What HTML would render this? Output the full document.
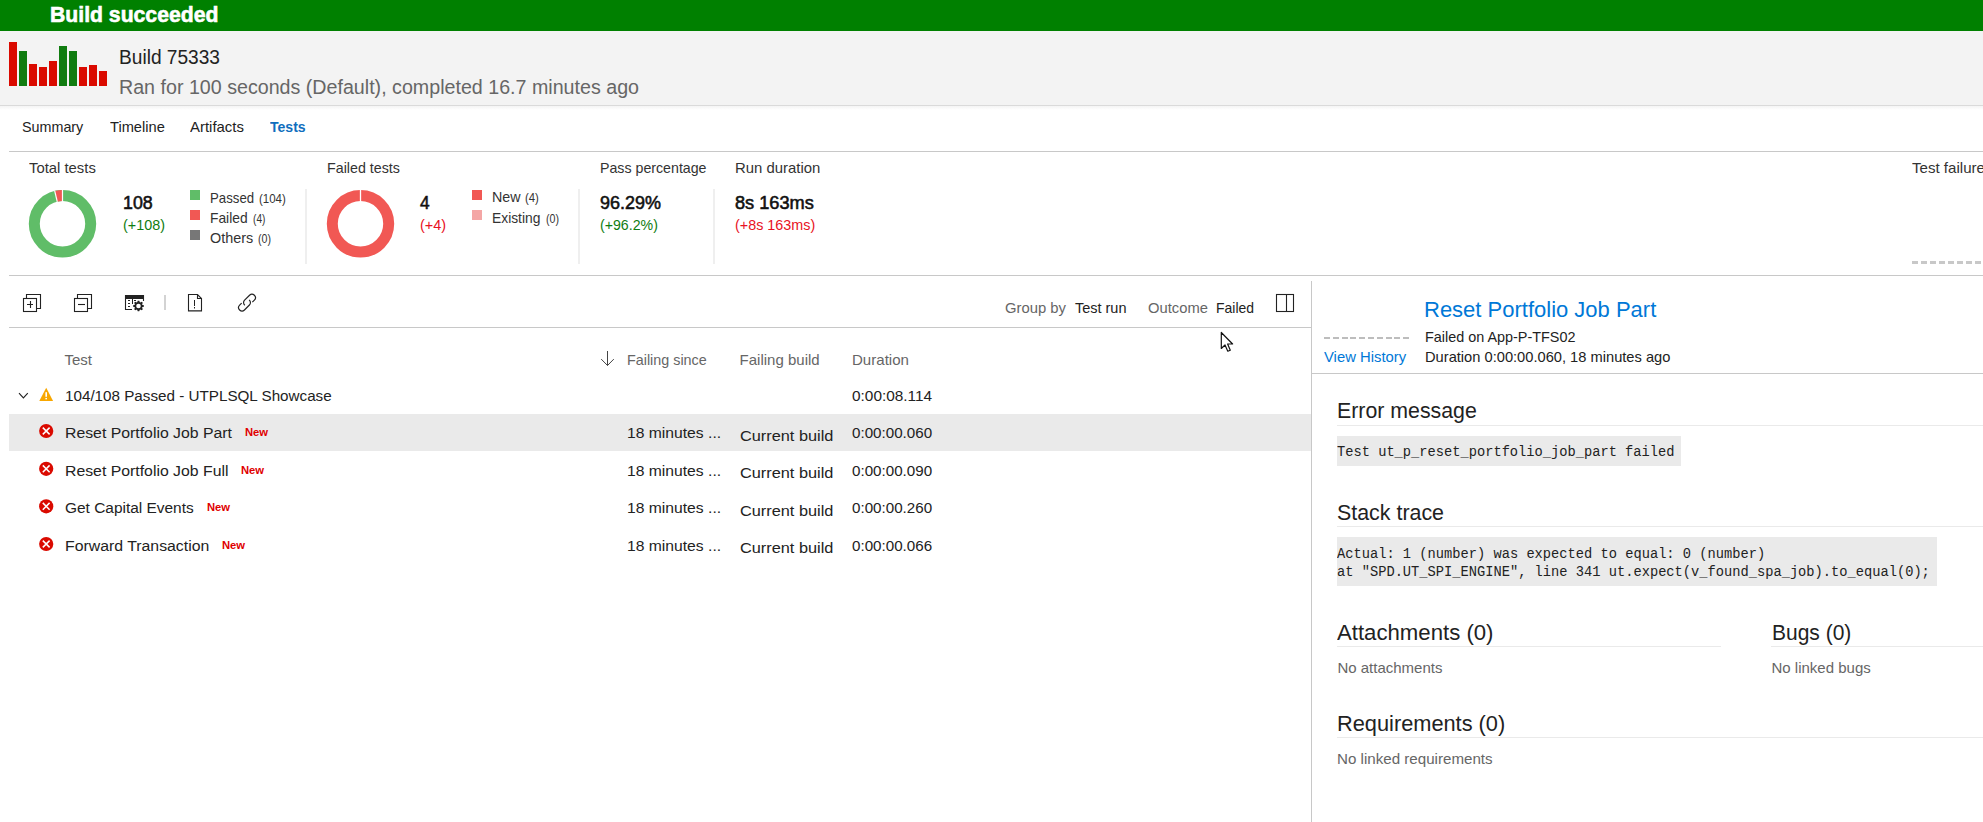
<!DOCTYPE html>
<html><head><meta charset="utf-8"><style>
html,body{margin:0;padding:0;}
body{width:1983px;height:822px;overflow:hidden;position:relative;background:#fff;font-family:"Liberation Sans",sans-serif;}
.a{position:absolute;}
.t{position:absolute;white-space:pre;transform-origin:0 0;}
</style></head><body>
<!-- top green bar -->
<div class="a" style="left:0;top:0;width:1983px;height:31px;background:#008000"></div>
<!-- header band -->
<div class="a" style="left:0;top:31px;width:1983px;height:74px;background:#f3f3f3"></div>
<div class="a" style="left:0;top:105px;width:1983px;height:1px;background:#dadada"></div>
<div class="a" style="left:0;top:106px;width:1983px;height:4px;background:linear-gradient(#f4f4f4,#fff)"></div>
<!-- build history bars -->
<svg class="a" style="left:0;top:31px" width="120" height="60">
  <g fill="#da0a00">
    <rect x="9" y="11" width="8" height="44"/>
    <rect x="29" y="33" width="8" height="22"/>
    <rect x="39" y="36" width="8" height="19"/>
    <rect x="49" y="30" width="8" height="25"/>
    <rect x="79" y="36" width="8" height="19"/>
    <rect x="89" y="34" width="8" height="21"/>
    <rect x="99" y="40" width="8" height="15"/>
  </g>
  <g fill="#107c10">
    <rect x="19" y="20" width="8" height="35"/>
    <rect x="59" y="15" width="8" height="40"/>
    <rect x="69" y="20" width="8" height="35"/>
  </g>
</svg>
<!-- tab underline -->
<div class="a" style="left:9px;top:151px;width:1974px;height:1px;background:#c8c8c8"></div>
<!-- stats bottom line -->
<div class="a" style="left:9px;top:275px;width:1974px;height:1px;background:#c8c8c8"></div>
<!-- stats separators -->
<div class="a" style="left:305px;top:189px;width:2px;height:75px;background:#efefef"></div>
<div class="a" style="left:578px;top:189px;width:2px;height:75px;background:#efefef"></div>
<div class="a" style="left:713px;top:189px;width:2px;height:75px;background:#efefef"></div>
<!-- donut total -->
<svg class="a" style="left:22px;top:183px" width="81" height="81">
  <g transform="translate(40.5,40.8)">
    <circle r="28.2" fill="none" stroke="#60bd68" stroke-width="11"/>
    <path d="M0,-33.7 A33.7,33.7 0 0 0 -7.75,-32.8 L-5.2,-22.1 A22.7,22.7 0 0 1 0,-22.7 Z" fill="#f15854"/>
    <line x1="0" y1="-34" x2="0" y2="-22" stroke="#fff" stroke-width="1.2"/>
    <line x1="-7.8" y1="-33" x2="-5.2" y2="-22" stroke="#fff" stroke-width="1.2"/>
  </g>
</svg>
<!-- legend squares -->
<div class="a" style="left:190px;top:190px;width:10px;height:10px;background:#60bd68"></div>
<div class="a" style="left:190px;top:210px;width:10px;height:10px;background:#f15854"></div>
<div class="a" style="left:190px;top:230px;width:10px;height:10px;background:#777"></div>
<!-- donut failed -->
<svg class="a" style="left:320px;top:183px" width="81" height="81">
  <g transform="translate(40.5,40.8)">
    <circle r="28.2" fill="none" stroke="#f15854" stroke-width="11"/>
    <line x1="0" y1="-34" x2="0" y2="-22" stroke="#fff" stroke-width="1.3"/>
  </g>
</svg>
<div class="a" style="left:472px;top:190px;width:10px;height:10px;background:#f15854"></div>
<div class="a" style="left:472px;top:210px;width:10px;height:10px;background:#f4a6a5"></div>
<!-- test failure dashed -->
<div class="a" style="left:1912px;top:261px;width:71px;height:3px;background:repeating-linear-gradient(90deg,#c8c8c8 0 6px,transparent 6px 9px)"></div>

<!-- toolbar icons -->
<svg class="a" style="left:0;top:280px" width="300" height="40" fill="none" stroke="#222" stroke-width="1.1">
  <!-- expand all -->
  <path d="M26.5,18.5 V14.5 H40.5 V28.5 H36.5"/>
  <rect x="23.5" y="18.5" width="13" height="13"/>
  <path d="M27,24.5 H33 M30.5,21 V28"/>
  <!-- collapse all -->
  <path d="M77.5,18.5 V14.5 H91.5 V28.5 H87.5"/>
  <rect x="74.5" y="18.5" width="13" height="13"/>
  <path d="M78,24.5 H85"/>
  <!-- column options -->
  <rect x="125.5" y="15" width="18" height="4" fill="#222" stroke="none"/>
  <path d="M125.5,15 V29.5 H132 M143.5,15 V21"/>
  <path d="M128,20.5 H130 M128,23.5 H130 M128,26.5 H130 M132.5,19 V24 M134,20.5 H136" stroke-width="1"/>
  <!-- separator -->
  <line x1="165" y1="15" x2="165" y2="30" stroke="#c8c8c8" stroke-width="1.6"/>
  <!-- file ! -->
  <path d="M188.5,14.5 H197.5 L201.5,18.5 V30.9 H188.5 Z M197.5,14.5 V18.5 H201.5"/>
  <path d="M194.5,20 V26 M194.5,27 V28.5" stroke-width="1"/>
  <!-- link -->
  <g transform="translate(247,22.6) rotate(-45) scale(0.9)" stroke-width="1.3">
    <path d="M4.6,3.8 H7.8 A3.8,3.8 0 0 0 7.8,-3.8 H0 A3.8,3.8 0 0 0 -3.8,0.5"/>
    <path d="M-4.6,-3.8 H-7.8 A3.8,3.8 0 0 0 -7.8,3.8 H0 A3.8,3.8 0 0 0 3.8,-0.5"/>
  </g>
</svg>
<!-- gear -->
<svg class="a" style="left:131px;top:298px" width="16" height="16">
  <g transform="translate(7.5,8)">
    <path d="M-1.37,-3.65 L-0.75,-5.35 L0.75,-5.35 L1.37,-3.65 L1.61,-3.55 L3.25,-4.31 L4.31,-3.25 L3.55,-1.61 L3.65,-1.37 L5.35,-0.75 L5.35,0.75 L3.65,1.37 L3.55,1.61 L4.31,3.25 L3.25,4.31 L1.61,3.55 L1.37,3.65 L0.75,5.35 L-0.75,5.35 L-1.37,3.65 L-1.61,3.55 L-3.25,4.31 L-4.31,3.25 L-3.55,1.61 L-3.65,1.37 L-5.35,0.75 L-5.35,-0.75 L-3.65,-1.37 L-3.55,-1.61 L-4.31,-3.25 L-3.25,-4.31 L-1.61,-3.55 Z" fill="#222" stroke="#fff" stroke-width="0.8" paint-order="stroke"/>
    <circle r="2.3" fill="#fff"/>
  </g>
</svg>
<!-- panel toggle icon -->
<svg class="a" style="left:1270px;top:288px" width="30" height="30" fill="none" stroke="#222" stroke-width="1.1">
  <rect x="6.5" y="6.5" width="17" height="17"/>
  <line x1="16.5" y1="6.5" x2="16.5" y2="23.5"/>
</svg>
<!-- toolbar bottom line -->
<div class="a" style="left:9px;top:327px;width:1302px;height:1px;background:#c8c8c8"></div>
<!-- splitter -->
<div class="a" style="left:1311px;top:281px;width:1px;height:541px;background:#c8c8c8"></div>

<!-- table -->
<svg class="a" style="left:595px;top:348px" width="24" height="22" fill="none" stroke="#444" stroke-width="1">
  <path d="M12.5,3 V17.5 M6.2,11.1 L12.5,17.5 L18.8,11.1"/>
</svg>
<!-- chevron -->
<svg class="a" style="left:14px;top:388px" width="20" height="16" fill="none" stroke="#222" stroke-width="1.15">
  <path d="M5,5.2 L9.4,9.8 L13.8,5.2"/>
</svg>
<!-- warning -->
<svg class="a" style="left:36px;top:385px" width="20" height="18">
  <path d="M10.2,2.7 L17.1,16 H3.3 Z" fill="#f8a700"/>
  <rect x="9.4" y="7.2" width="1.6" height="4.6" fill="#fff"/>
  <rect x="9.4" y="12.9" width="1.6" height="1.4" fill="#fff"/>
</svg>
<!-- selected row -->
<div class="a" style="left:9px;top:414px;width:1302px;height:37px;background:#eaeaea"></div>
<!-- error icons -->
<svg class="a" style="left:36px;top:420px" width="20" height="140">
  <defs>
    <g id="err"><circle r="7.1" fill="#da0a00"/><path d="M-3.4,-3.4 L3.4,3.4 M-3.4,3.4 L3.4,-3.4" stroke="#fff" stroke-width="1.5"/></g>
  </defs>
  <use href="#err" x="10.2" y="11"/>
  <use href="#err" x="10.2" y="48.8"/>
  <use href="#err" x="10.2" y="86.3"/>
  <use href="#err" x="10.2" y="124"/>
</svg>

<!-- right panel -->
<div class="a" style="left:1324px;top:337px;width:86px;height:2px;background:repeating-linear-gradient(90deg,#bdbdbd 0 6px,transparent 6px 8.8px)"></div>
<div class="a" style="left:1312px;top:373px;width:671px;height:1px;background:#c8c8c8"></div>
<div class="a" style="left:1337px;top:425px;width:646px;height:1px;background:#eaeaea"></div>
<div class="a" style="left:1337px;top:436px;width:344px;height:30px;background:#eaeaea"></div>
<div class="a" style="left:1337px;top:526px;width:646px;height:1px;background:#eaeaea"></div>
<div class="a" style="left:1337px;top:537px;width:600px;height:49px;background:#eaeaea"></div>
<div class="a" style="left:1337px;top:646px;width:384px;height:1px;background:#eaeaea"></div>
<div class="a" style="left:1771px;top:646px;width:212px;height:1px;background:#eaeaea"></div>
<div class="a" style="left:1337px;top:737px;width:646px;height:1px;background:#eaeaea"></div>

<!-- cursor -->
<svg class="a" style="left:1215px;top:327px;z-index:10" width="24" height="30">
  <path d="M6.3,5.5 V21.5 L10,18 L12.8,24.2 L15.3,23.2 L12.6,17 L17.6,17 Z" fill="#fff" stroke="#111" stroke-width="1.2" stroke-linejoin="round"/>
</svg>

<div class="t" style="left:50.3px;top:4.00px;font-size:22px;line-height:22px;color:#fff;font-weight:700;font-family:'Liberation Sans',sans-serif;transform:scaleX(0.9631);-webkit-text-stroke:0.6px #fff;">Build succeeded</div>
<div class="t" style="left:119.0px;top:48.00px;font-size:19.5px;line-height:19.5px;color:#222;font-weight:400;font-family:'Liberation Sans',sans-serif;transform:scaleX(0.9804);">Build 75333</div>
<div class="t" style="left:119.0px;top:78.00px;font-size:19.5px;line-height:19.5px;color:#666;font-weight:400;font-family:'Liberation Sans',sans-serif;transform:scaleX(1.0078);">Ran for 100 seconds (Default), completed 16.7 minutes ago</div>
<div class="t" style="left:22.2px;top:119.00px;font-size:15px;line-height:15px;color:#222;font-weight:400;font-family:'Liberation Sans',sans-serif;transform:scaleX(0.9550);">Summary</div>
<div class="t" style="left:110.0px;top:119.00px;font-size:15px;line-height:15px;color:#222;font-weight:400;font-family:'Liberation Sans',sans-serif;transform:scaleX(0.9761);">Timeline</div>
<div class="t" style="left:190.1px;top:119.00px;font-size:15px;line-height:15px;color:#222;font-weight:400;font-family:'Liberation Sans',sans-serif;transform:scaleX(0.9947);">Artifacts</div>
<div class="t" style="left:269.8px;top:119.00px;font-size:15px;line-height:15px;color:#106ebe;font-weight:700;font-family:'Liberation Sans',sans-serif;transform:scaleX(0.9375);">Tests</div>
<div class="t" style="left:28.5px;top:160.00px;font-size:15px;line-height:15px;color:#333;font-weight:400;font-family:'Liberation Sans',sans-serif;transform:scaleX(0.9892);">Total tests</div>
<div class="t" style="left:326.5px;top:160.00px;font-size:15px;line-height:15px;color:#333;font-weight:400;font-family:'Liberation Sans',sans-serif;transform:scaleX(0.9504);">Failed tests</div>
<div class="t" style="left:599.9px;top:160.00px;font-size:15px;line-height:15px;color:#333;font-weight:400;font-family:'Liberation Sans',sans-serif;transform:scaleX(0.9460);">Pass percentage</div>
<div class="t" style="left:734.9px;top:160.00px;font-size:15px;line-height:15px;color:#333;font-weight:400;font-family:'Liberation Sans',sans-serif;transform:scaleX(0.9929);">Run duration</div>
<div class="t" style="left:1911.8px;top:160.00px;font-size:15px;line-height:15px;color:#333;font-weight:400;font-family:'Liberation Sans',sans-serif;transform:scaleX(1.0062);">Test failure</div>
<div class="t" style="left:122.9px;top:195.00px;font-size:17.5px;line-height:17.5px;color:#111;font-weight:400;font-family:'Liberation Sans',sans-serif;transform:scaleX(1.0170);-webkit-text-stroke:0.55px #111;">108</div>
<div class="t" style="left:122.5px;top:217.00px;font-size:15px;line-height:15px;color:#107c10;font-weight:400;font-family:'Liberation Sans',sans-serif;transform:scaleX(0.9593);">(+108)</div>
<div class="t" style="left:209.6px;top:191.00px;font-size:14.5px;line-height:14.5px;color:#333;font-weight:400;font-family:'Liberation Sans',sans-serif;transform:scaleX(0.9116);">Passed</div>
<div class="t" style="left:258.5px;top:193.00px;font-size:12px;line-height:12px;color:#333;font-weight:400;font-family:'Liberation Sans',sans-serif;transform:scaleX(0.9566);">(104)</div>
<div class="t" style="left:209.6px;top:211.00px;font-size:14.5px;line-height:14.5px;color:#333;font-weight:400;font-family:'Liberation Sans',sans-serif;transform:scaleX(0.9519);">Failed</div>
<div class="t" style="left:252.8px;top:213.00px;font-size:12px;line-height:12px;color:#333;font-weight:400;font-family:'Liberation Sans',sans-serif;transform:scaleX(0.8452);">(4)</div>
<div class="t" style="left:209.6px;top:231.00px;font-size:14.5px;line-height:14.5px;color:#333;font-weight:400;font-family:'Liberation Sans',sans-serif;transform:scaleX(0.9927);">Others</div>
<div class="t" style="left:258.0px;top:233.00px;font-size:12px;line-height:12px;color:#333;font-weight:400;font-family:'Liberation Sans',sans-serif;transform:scaleX(0.8860);">(0)</div>
<div class="t" style="left:420.4px;top:195.00px;font-size:17.5px;line-height:17.5px;color:#111;font-weight:400;font-family:'Liberation Sans',sans-serif;transform:scaleX(0.9862);-webkit-text-stroke:0.55px #111;">4</div>
<div class="t" style="left:420.4px;top:217.00px;font-size:15px;line-height:15px;color:#e81123;font-weight:400;font-family:'Liberation Sans',sans-serif;transform:scaleX(0.9633);">(+4)</div>
<div class="t" style="left:491.7px;top:190.00px;font-size:14.5px;line-height:14.5px;color:#333;font-weight:400;font-family:'Liberation Sans',sans-serif;transform:scaleX(0.9857);">New</div>
<div class="t" style="left:524.5px;top:192.00px;font-size:12px;line-height:12px;color:#333;font-weight:400;font-family:'Liberation Sans',sans-serif;transform:scaleX(0.9474);">(4)</div>
<div class="t" style="left:491.7px;top:211.00px;font-size:14.5px;line-height:14.5px;color:#333;font-weight:400;font-family:'Liberation Sans',sans-serif;transform:scaleX(0.9531);">Existing</div>
<div class="t" style="left:545.9px;top:213.00px;font-size:12px;line-height:12px;color:#333;font-weight:400;font-family:'Liberation Sans',sans-serif;transform:scaleX(0.8860);">(0)</div>
<div class="t" style="left:600.1px;top:195.00px;font-size:17.5px;line-height:17.5px;color:#111;font-weight:400;font-family:'Liberation Sans',sans-serif;transform:scaleX(1.0276);-webkit-text-stroke:0.55px #111;">96.29%</div>
<div class="t" style="left:600.1px;top:217.00px;font-size:15px;line-height:15px;color:#107c10;font-weight:400;font-family:'Liberation Sans',sans-serif;transform:scaleX(0.9446);">(+96.2%)</div>
<div class="t" style="left:735.1px;top:195.00px;font-size:17.5px;line-height:17.5px;color:#111;font-weight:400;font-family:'Liberation Sans',sans-serif;transform:scaleX(1.0386);-webkit-text-stroke:0.55px #111;">8s 163ms</div>
<div class="t" style="left:735.1px;top:217.00px;font-size:15px;line-height:15px;color:#e81123;font-weight:400;font-family:'Liberation Sans',sans-serif;transform:scaleX(0.9571);">(+8s 163ms)</div>
<div class="t" style="left:1004.6px;top:301.00px;font-size:14.5px;line-height:14.5px;color:#666;font-weight:400;font-family:'Liberation Sans',sans-serif;transform:scaleX(1.0225);">Group by</div>
<div class="t" style="left:1074.9px;top:301.00px;font-size:14.5px;line-height:14.5px;color:#222;font-weight:400;font-family:'Liberation Sans',sans-serif;">Test run</div>
<div class="t" style="left:1147.8px;top:301.00px;font-size:14.5px;line-height:14.5px;color:#666;font-weight:400;font-family:'Liberation Sans',sans-serif;transform:scaleX(1.0180);">Outcome</div>
<div class="t" style="left:1216.3px;top:301.00px;font-size:14.5px;line-height:14.5px;color:#222;font-weight:400;font-family:'Liberation Sans',sans-serif;transform:scaleX(0.9620);">Failed</div>
<div class="t" style="left:64.5px;top:352.00px;font-size:15px;line-height:15px;color:#666;font-weight:400;font-family:'Liberation Sans',sans-serif;">Test</div>
<div class="t" style="left:627.3px;top:352.00px;font-size:15px;line-height:15px;color:#666;font-weight:400;font-family:'Liberation Sans',sans-serif;transform:scaleX(0.9559);">Failing since</div>
<div class="t" style="left:739.6px;top:352.00px;font-size:15px;line-height:15px;color:#666;font-weight:400;font-family:'Liberation Sans',sans-serif;">Failing build</div>
<div class="t" style="left:852.1px;top:352.00px;font-size:15px;line-height:15px;color:#666;font-weight:400;font-family:'Liberation Sans',sans-serif;transform:scaleX(1.0035);">Duration</div>
<div class="t" style="left:64.5px;top:388.00px;font-size:15.5px;line-height:15.5px;color:#222;font-weight:400;font-family:'Liberation Sans',sans-serif;transform:scaleX(0.9816);">104/108 Passed - UTPLSQL Showcase</div>
<div class="t" style="left:852.1px;top:388.00px;font-size:15.5px;line-height:15.5px;color:#222;font-weight:400;font-family:'Liberation Sans',sans-serif;transform:scaleX(0.9921);">0:00:08.114</div>
<div class="t" style="left:64.5px;top:425.00px;font-size:15.5px;line-height:15.5px;color:#222;font-weight:400;font-family:'Liberation Sans',sans-serif;transform:scaleX(1.0201);">Reset Portfolio Job Part</div>
<div class="t" style="left:244.6px;top:427.00px;font-size:11px;line-height:11px;color:#e00000;font-weight:700;font-family:'Liberation Sans',sans-serif;transform:scaleX(1.0210);">New</div>
<div class="t" style="left:627.3px;top:425.00px;font-size:15.5px;line-height:15.5px;color:#222;font-weight:400;font-family:'Liberation Sans',sans-serif;transform:scaleX(1.0113);">18 minutes ...</div>
<div class="t" style="left:739.6px;top:428.00px;font-size:15.5px;line-height:15.5px;color:#222;font-weight:400;font-family:'Liberation Sans',sans-serif;transform:scaleX(1.0524);">Current build</div>
<div class="t" style="left:852.1px;top:425.00px;font-size:15.5px;line-height:15.5px;color:#222;font-weight:400;font-family:'Liberation Sans',sans-serif;transform:scaleX(0.9781);">0:00:00.060</div>
<div class="t" style="left:64.5px;top:463.00px;font-size:15.5px;line-height:15.5px;color:#222;font-weight:400;font-family:'Liberation Sans',sans-serif;transform:scaleX(1.0203);">Reset Portfolio Job Full</div>
<div class="t" style="left:241.2px;top:465.00px;font-size:11px;line-height:11px;color:#e00000;font-weight:700;font-family:'Liberation Sans',sans-serif;transform:scaleX(1.0210);">New</div>
<div class="t" style="left:627.3px;top:463.00px;font-size:15.5px;line-height:15.5px;color:#222;font-weight:400;font-family:'Liberation Sans',sans-serif;transform:scaleX(1.0113);">18 minutes ...</div>
<div class="t" style="left:739.6px;top:465.00px;font-size:15.5px;line-height:15.5px;color:#222;font-weight:400;font-family:'Liberation Sans',sans-serif;transform:scaleX(1.0524);">Current build</div>
<div class="t" style="left:852.1px;top:463.00px;font-size:15.5px;line-height:15.5px;color:#222;font-weight:400;font-family:'Liberation Sans',sans-serif;transform:scaleX(0.9781);">0:00:00.090</div>
<div class="t" style="left:64.5px;top:500.00px;font-size:15.5px;line-height:15.5px;color:#222;font-weight:400;font-family:'Liberation Sans',sans-serif;transform:scaleX(0.9959);">Get Capital Events</div>
<div class="t" style="left:206.8px;top:502.00px;font-size:11px;line-height:11px;color:#e00000;font-weight:700;font-family:'Liberation Sans',sans-serif;transform:scaleX(1.0210);">New</div>
<div class="t" style="left:627.3px;top:500.00px;font-size:15.5px;line-height:15.5px;color:#222;font-weight:400;font-family:'Liberation Sans',sans-serif;transform:scaleX(1.0113);">18 minutes ...</div>
<div class="t" style="left:739.6px;top:503.00px;font-size:15.5px;line-height:15.5px;color:#222;font-weight:400;font-family:'Liberation Sans',sans-serif;transform:scaleX(1.0524);">Current build</div>
<div class="t" style="left:852.1px;top:500.00px;font-size:15.5px;line-height:15.5px;color:#222;font-weight:400;font-family:'Liberation Sans',sans-serif;transform:scaleX(0.9781);">0:00:00.260</div>
<div class="t" style="left:64.5px;top:538.00px;font-size:15.5px;line-height:15.5px;color:#222;font-weight:400;font-family:'Liberation Sans',sans-serif;transform:scaleX(1.0214);">Forward Transaction</div>
<div class="t" style="left:221.9px;top:540.00px;font-size:11px;line-height:11px;color:#e00000;font-weight:700;font-family:'Liberation Sans',sans-serif;transform:scaleX(1.0210);">New</div>
<div class="t" style="left:627.3px;top:538.00px;font-size:15.5px;line-height:15.5px;color:#222;font-weight:400;font-family:'Liberation Sans',sans-serif;transform:scaleX(1.0113);">18 minutes ...</div>
<div class="t" style="left:739.6px;top:540.00px;font-size:15.5px;line-height:15.5px;color:#222;font-weight:400;font-family:'Liberation Sans',sans-serif;transform:scaleX(1.0524);">Current build</div>
<div class="t" style="left:852.1px;top:538.00px;font-size:15.5px;line-height:15.5px;color:#222;font-weight:400;font-family:'Liberation Sans',sans-serif;transform:scaleX(0.9781);">0:00:00.066</div>
<div class="t" style="left:1424.3px;top:299.00px;font-size:22.5px;line-height:22.5px;color:#0078d7;font-weight:400;font-family:'Liberation Sans',sans-serif;transform:scaleX(0.9776);">Reset Portfolio Job Part</div>
<div class="t" style="left:1424.6px;top:329.00px;font-size:15px;line-height:15px;color:#222;font-weight:400;font-family:'Liberation Sans',sans-serif;transform:scaleX(0.9595);">Failed on App-P-TFS02</div>
<div class="t" style="left:1324.4px;top:349.00px;font-size:15px;line-height:15px;color:#0078d7;font-weight:400;font-family:'Liberation Sans',sans-serif;transform:scaleX(0.9880);">View History</div>
<div class="t" style="left:1424.6px;top:349.00px;font-size:15px;line-height:15px;color:#222;font-weight:400;font-family:'Liberation Sans',sans-serif;transform:scaleX(0.9776);">Duration 0:00:00.060, 18 minutes ago</div>
<div class="t" style="left:1337.4px;top:400.00px;font-size:22.5px;line-height:22.5px;color:#222;font-weight:400;font-family:'Liberation Sans',sans-serif;transform:scaleX(0.9475);">Error message</div>
<div class="t" style="left:1337.4px;top:445.00px;font-size:14.5px;line-height:14.5px;color:#222;font-weight:400;font-family:'Liberation Mono',sans-serif;transform:scaleX(0.9460);">Test ut_p_reset_portfolio_job_part failed</div>
<div class="t" style="left:1337.4px;top:502.00px;font-size:22.5px;line-height:22.5px;color:#222;font-weight:400;font-family:'Liberation Sans',sans-serif;transform:scaleX(0.9507);">Stack trace</div>
<div class="t" style="left:1337.4px;top:547.00px;font-size:14.5px;line-height:14.5px;color:#222;font-weight:400;font-family:'Liberation Mono',sans-serif;transform:scaleX(0.9463);">Actual: 1 (number) was expected to equal: 0 (number)</div>
<div class="t" style="left:1337.4px;top:565.00px;font-size:14.5px;line-height:14.5px;color:#222;font-weight:400;font-family:'Liberation Mono',sans-serif;transform:scaleX(0.9463);">at &quot;SPD.UT_SPI_ENGINE&quot;, line 341 ut.expect(v_found_spa_job).to_equal(0);</div>
<div class="t" style="left:1337.4px;top:622.00px;font-size:22.5px;line-height:22.5px;color:#222;font-weight:400;font-family:'Liberation Sans',sans-serif;transform:scaleX(0.9854);">Attachments (0)</div>
<div class="t" style="left:1337.4px;top:660.00px;font-size:15px;line-height:15px;color:#666;font-weight:400;font-family:'Liberation Sans',sans-serif;">No attachments</div>
<div class="t" style="left:1771.5px;top:622.00px;font-size:22.5px;line-height:22.5px;color:#222;font-weight:400;font-family:'Liberation Sans',sans-serif;transform:scaleX(0.9324);">Bugs (0)</div>
<div class="t" style="left:1771.5px;top:660.00px;font-size:15px;line-height:15px;color:#666;font-weight:400;font-family:'Liberation Sans',sans-serif;">No linked bugs</div>
<div class="t" style="left:1337.4px;top:713.00px;font-size:22.5px;line-height:22.5px;color:#222;font-weight:400;font-family:'Liberation Sans',sans-serif;transform:scaleX(0.9676);">Requirements (0)</div>
<div class="t" style="left:1337.4px;top:751.00px;font-size:15px;line-height:15px;color:#666;font-weight:400;font-family:'Liberation Sans',sans-serif;transform:scaleX(1.0088);">No linked requirements</div>
</body></html>
